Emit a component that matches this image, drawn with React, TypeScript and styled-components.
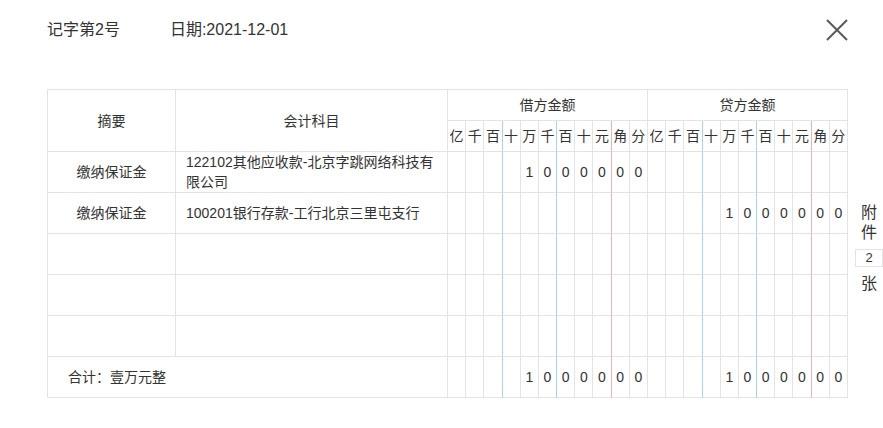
import React from "react";
import styled, { createGlobalStyle } from "styled-components";

const Global = createGlobalStyle`
  html, body { margin: 0; padding: 0; background: #fff; }
  body { font-family: "Liberation Sans", "Noto Sans CJK SC", sans-serif; color: #333; }
`;

const GRID = "#e3e3e3";
const BLUE = "#a8d4e4";
const RED = "#e4b4be";

const Page = styled.div`
  width: 883px;
  height: 428px;
  box-sizing: border-box;
  padding: 20px 0 0 47px;
`;

const TopBar = styled.div`
  width: 800px;
  height: 20px;
  display: flex;
  align-items: center;
  justify-content: space-between;
  font-size: 16px;
  line-height: 20px;
  color: #333;
`;

const Meta = styled.div`
  display: flex;
  gap: 50px;
`;

const CloseBtn = styled.button`
  width: 22px;
  height: 22px;
  padding: 0;
  margin-right: -1px;
  border: 0;
  background: none;
  display: flex;
  align-items: center;
  justify-content: center;
  cursor: pointer;
`;

const Body = styled.div`
  margin-top: 49px;
  display: flex;
  align-items: flex-start;
  gap: 7px;
`;

const Table = styled.table`
  width: 800px;
  table-layout: fixed;
  border-collapse: separate;
  border-spacing: 0;
  border-top: 1px solid ${GRID};
  border-left: 1px solid ${GRID};
  font-size: 14px;
  color: #333;
`;

const Cell = styled.td<{ $align?: string }>`
  border-right: 1px solid ${GRID};
  border-bottom: 1px solid ${GRID};
  text-align: ${(p) => p.$align || "center"};
  padding: 0;
  line-height: 20px;
  vertical-align: middle;
  font-weight: normal;
`;

const Subject = styled(Cell)`
  padding: 0 11px 0 10px;
`;

const Total = styled(Cell)`
  padding-left: 20px;
`;

const DigitCell = styled.td<{ $line: "g" | "b" | "r" }>`
  border-right: 1px solid
    ${(p) => (p.$line === "b" ? BLUE : p.$line === "r" ? RED : GRID)};
  border-bottom: 1px solid ${GRID};
  padding: 0;
  text-align: center;
  font-size: 14px;
  font-weight: normal;
  line-height: 20px;
  vertical-align: middle;
`;

const HeadRow = styled.tr`
  height: 31px;
`;

const DataRow = styled.tr`
  height: 41px;
`;

const Side = styled.div`
  margin-top: 114px;
  width: 28px;
  display: flex;
  flex-direction: column;
  align-items: center;
  font-size: 16px;
  line-height: 20px;
  color: #333;
`;

const CountBox = styled.div`
  margin: 6px 0 7px;
  width: 26px;
  height: 16px;
  border: 1px solid ${GRID};
  font-size: 13px;
  line-height: 16px;
  text-align: center;
`;

const UNITS = ["亿", "千", "百", "十", "万", "千", "百", "十", "元", "角", "分"];
const lineFor = (i: number): "g" | "b" | "r" =>
  i === 2 || i === 5 ? "b" : i === 8 ? "r" : "g";

const digitsOf = (amount: string | null) => {
  const arr: string[] = Array(11).fill("");
  if (!amount) return arr;
  for (let i = 0; i < amount.length; i++) arr[11 - amount.length + i] = amount[i];
  return arr;
};

const Digits: React.FC<{ amount: string | null }> = ({ amount }) => (
  <>
    {digitsOf(amount).map((d, i) => (
      <DigitCell key={i} $line={lineFor(i)}>
        {d}
      </DigitCell>
    ))}
  </>
);

const rows = [
  {
    summary: "缴纳保证金",
    subject: "122102其他应收款-北京字跳网络科技有限公司",
    debit: "1000000",
    credit: null,
  },
  {
    summary: "缴纳保证金",
    subject: "100201银行存款-工行北京三里屯支行",
    debit: null,
    credit: "1000000",
  },
  { summary: "", subject: "", debit: null, credit: null },
  { summary: "", subject: "", debit: null, credit: null },
  { summary: "", subject: "", debit: null, credit: null },
];

export default function App() {
  return (
    <Page>
      <Global />
      <TopBar>
        <Meta>
          <span>记字第2号</span>
          <span>日期:2021-12-01</span>
        </Meta>
        <CloseBtn aria-label="关闭">
          <svg width="22" height="22" viewBox="0 0 22 22">
            <path
              d="M1 1 L21 21 M21 1 L1 21"
              stroke="#5a5a5a"
              strokeWidth="2"
              fill="none"
            />
          </svg>
        </CloseBtn>
      </TopBar>
      <Body>
        <Table>
          <colgroup>
            <col style={{ width: 128 }} />
            <col style={{ width: 272 }} />
            {Array.from({ length: 22 }).map((_, i) => (
              <col key={i} style={{ width: 200 / 11 }} />
            ))}
          </colgroup>
          <thead>
            <HeadRow>
              <Cell as="th" rowSpan={2}>摘要</Cell>
              <Cell as="th" rowSpan={2}>会计科目</Cell>
              <Cell as="th" colSpan={11}>借方金额</Cell>
              <Cell as="th" colSpan={11}>贷方金额</Cell>
            </HeadRow>
            <HeadRow>
              {[...UNITS, ...UNITS].map((u, i) => (
                <DigitCell as="th" key={i} $line={lineFor(i % 11)}>
                  {u}
                </DigitCell>
              ))}
            </HeadRow>
          </thead>
          <tbody>
            {rows.map((r, i) => (
              <DataRow key={i}>
                <Cell>{r.summary}</Cell>
                <Subject $align="left">{r.subject}</Subject>
                <Digits amount={r.debit} />
                <Digits amount={r.credit} />
              </DataRow>
            ))}
            <DataRow>
              <Total colSpan={2} $align="left">合计：壹万元整</Total>
              <Digits amount="1000000" />
              <Digits amount="1000000" />
            </DataRow>
          </tbody>
        </Table>
        <Side>
          <span>附</span>
          <span>件</span>
          <CountBox>2</CountBox>
          <span>张</span>
        </Side>
      </Body>
    </Page>
  );
}
